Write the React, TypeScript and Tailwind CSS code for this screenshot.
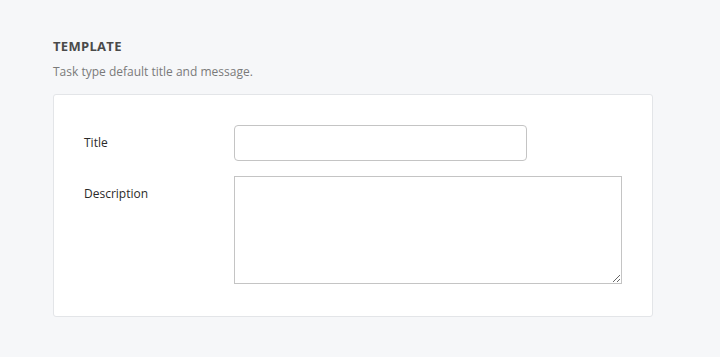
import React from 'react';

export default function App() {
  return (
    <div className="min-h-[357px] w-full bg-[#f6f7f9] px-[53px] pt-[37px] font-['Open_Sans',sans-serif]">
      <div className="w-[600px]">
        <h2 className="text-[13px] font-bold leading-[18px] tracking-[0.3px] text-[#4a4a4a]">TEMPLATE</h2>
        <p className="mt-[8px] text-[12px] leading-[18px] text-[#7a7a7a]">Task type default title and message.</p>
        <div className="mt-[13px] rounded-[3px] border border-[#e3e5e8] bg-white px-[30px] pb-[32px] pt-[30px]">
          <div className="grid grid-cols-[150px_1fr] gap-y-[15px]">
            <label className="pt-[9px] text-[12px] leading-[18px] text-[#2a2a2a]">Title</label>
            <input
              type="text"
              className="h-[36px] w-[293px] rounded-[4px] border border-[#c4c4c4] bg-white px-2 text-[12px] outline-none"
            />
            <label className="pt-[9px] text-[12px] leading-[18px] text-[#2a2a2a]">Description</label>
            <textarea className="block h-[108px] w-[388px] resize rounded-none border border-[#c4c4c4] bg-white px-2 text-[12px] outline-none" />
          </div>
        </div>
      </div>
    </div>
  );
}
